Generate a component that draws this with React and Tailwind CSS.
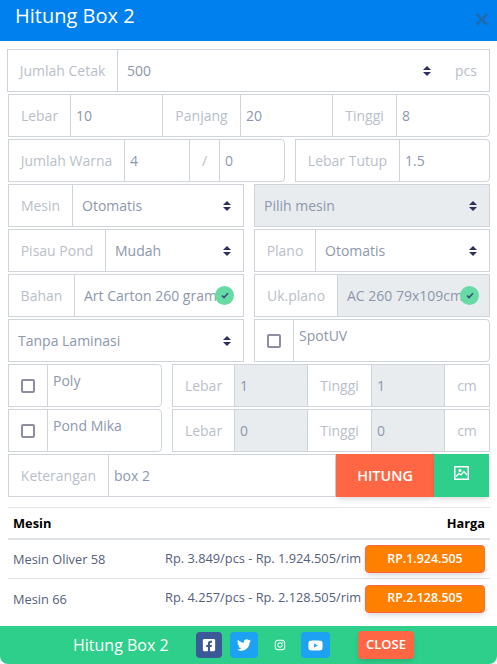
import React from 'react';
import { FaFacebookSquare, FaTwitter, FaInstagram, FaYoutube } from 'react-icons/fa';

const Chevrons = () => (
  <svg width="8" height="10" viewBox="0 0 8 10" className="shrink-0">
    <path d="M4 0 L8 4 H0 Z M4 10 L0 6 H8 Z" fill="#2f2f5e" />
  </svg>
);

const Check = ({ className }) => (
  <span className={`absolute top-[12px] w-[19px] h-[19px] rounded-full bg-[#66dba6] flex items-center justify-center ${className}`}>
    <svg width="8" height="7" viewBox="0 0 8 7">
      <path d="M1 3.5 L3 5.5 L7 1.2" fill="none" stroke="#36507a" strokeWidth="1.6" />
    </svg>
  </span>
);

const ImageIcon = () => (
  <svg width="15" height="14" viewBox="0 0 15 14" fill="none" stroke="white">
    <rect x="0.75" y="0.75" width="13.5" height="12.5" strokeWidth="1.5" />
    <circle cx="6" cy="4.5" r="1.6" fill="white" stroke="none" />
    <path d="M2 10.5 L5 7.5 L7 9 L10 5.5 L13 9" strokeWidth="1.2" />
  </svg>
);

const Label = ({ w, children, right }) => (
  <div className={`${w} shrink-0 h-full flex items-center justify-center border border-[#ced4da] -ml-px first:ml-0 text-[#b9bfc9] ${right ? 'rounded-r' : ''}`}>
    {children}
  </div>
);

const Input = ({ w, children, gray, right, pl = 'pl-[5px]' }) => (
  <div className={`${w} h-full flex items-center ${pl} border border-[#ced4da] -ml-px text-[#8d97ad] ${gray ? 'bg-[#e9ecef]' : ''} ${right ? 'rounded-r' : ''}`}>
    {children}
  </div>
);

const Select = ({ w, children, gray, noLabel }) => (
  <div className={`${w} h-full flex items-center justify-between pl-[9px] pr-[12px] border border-[#ced4da] ${noLabel ? '' : '-ml-px'} text-[#8d97ad] ${gray ? 'bg-[#e9ecef]' : ''}`}>
    <span>{children}</span>
    <Chevrons />
  </div>
);

const Box = () => <span className="block w-[14px] h-[14px] rounded-[2px] border-2 border-[#8f8ea0]" />;

const Row = ({ children, className = '' }) => (
  <div className={`flex h-[43px] ${className}`}>{children}</div>
);

const Half = ({ children, className = '' }) => (
  <div className={`relative flex h-full ${className}`}>{children}</div>
);

const CheckCell = ({ label, className }) => (
  <Half className={className}>
    <div className="w-[40px] shrink-0 h-full flex items-center justify-center border border-[#ced4da]"><Box /></div>
    <div className="flex-1 h-full border border-[#ced4da] -ml-px rounded-r pl-[5px] pt-[5px] text-[#8d97ad]">{label}</div>
  </Half>
);

const Size = ({ a, b }) => (
  <Half className="w-[318px] ml-[10px]">
    <Label w="w-[63px]">Lebar</Label>
    <Input w="w-[74px]" gray>{a}</Input>
    <Label w="w-[65px]">Tinggi</Label>
    <Input w="w-[74px]" gray>{b}</Input>
    <Label w="w-[46px]">cm</Label>
  </Half>
);

const PriceRow = ({ name, detail, total, border }) => (
  <div className={`flex h-[39px] items-center pl-[5px] pr-[5px] ${border ? 'border-b border-[#dee2e6]' : ''}`}>
    <span className="text-[12.8px] text-[#55607d] w-[150px] pt-[2px]">{name}</span>
    <span className="flex-1 text-right text-[12.8px] text-[#55607d] pr-[4px] pb-[1px] whitespace-nowrap">{detail}</span>
    <span className="w-[120px] h-[28px] flex items-center justify-center rounded bg-[#ff8000] border border-[#ff6644] text-white text-[12.4px] font-semibold shadow-md shrink-0">{total}</span>
  </div>
);

const Social = ({ w, bg, children }) => (
  <span className={`${w} h-[26px] rounded flex items-center justify-center text-white ${bg}`}>{children}</span>
);

export default function App() {
  return (
    <div className="w-[497px] h-[664px] bg-white flex flex-col font-['Open_Sans',sans-serif] text-[14px]">
      <div className="h-[41px] bg-[#0080ee] flex items-start justify-between pl-[15px] pr-[7px] shrink-0">
        <span className="text-[20px] leading-[32px] text-white">Hitung Box 2</span>
        <span className="text-[#1f6bab] text-[27px] leading-[26px] mt-[6px] font-semibold">×</span>
      </div>

      <div className="flex-1 pt-[8px] pl-[8px] pr-[7px] flex flex-col gap-[2px]">
        <Row className="-ml-px">
          <Label w="w-[111px]">Jumlah Cetak</Label>
          <div className="flex-1 h-full flex items-center justify-between border border-[#ced4da] -ml-px pl-[9px] pr-[12px] text-[#8d97ad]">
            <span>500</span>
            <span className="flex items-center gap-[24px]"><Chevrons /><span className="text-[#b9bfc9]">pcs</span></span>
          </div>
        </Row>
        <Row>
          <Label w="w-[63px]">Lebar</Label>
          <Input w="w-[93px]">10</Input>
          <Label w="w-[79px]">Panjang</Label>
          <Input w="w-[93px]">20</Input>
          <Label w="w-[65px]">Tinggi</Label>
          <Input w="flex-1" right>8</Input>
        </Row>
        <Row>
          <Half className="w-[277px]">
            <Label w="w-[117px]">Jumlah Warna</Label>
            <Input w="w-[66px]">4</Input>
            <Label w="w-[31px]">/</Label>
            <Input w="flex-1" right>0</Input>
          </Half>
          <Half className="flex-1 ml-[10px]">
            <Label w="w-[105px]">Lebar Tutup</Label>
            <Input w="flex-1" right>1.5</Input>
          </Half>
        </Row>
        <Row>
          <Half className="w-[236px]">
            <Label w="w-[65px]">Mesin</Label>
            <Select w="flex-1">Otomatis</Select>
          </Half>
          <Half className="flex-1 ml-[10px]">
            <Select w="flex-1" gray noLabel>Pilih mesin</Select>
          </Half>
        </Row>
        <Row>
          <Half className="w-[236px]">
            <Label w="w-[98px]">Pisau Pond</Label>
            <Select w="flex-1">Mudah</Select>
          </Half>
          <Half className="flex-1 ml-[10px]">
            <Label w="w-[62px]">Plano</Label>
            <Select w="flex-1">Otomatis</Select>
          </Half>
        </Row>
        <Row>
          <Half className="w-[236px]">
            <Label w="w-[67px]">Bahan</Label>
            <Input w="flex-1" pl="pl-[9px]">Art Carton 260 gram</Input>
            <Check className="left-[207px]" />
          </Half>
          <Half className="flex-1 ml-[10px]">
            <Label w="w-[84px]">Uk.plano</Label>
            <Input w="flex-1" gray pl="pl-[9px]">AC 260 79x109cm</Input>
            <Check className="left-[206px]" />
          </Half>
        </Row>
        <Row>
          <Half className="w-[236px]">
            <Select w="flex-1" noLabel>Tanpa Laminasi</Select>
          </Half>
          <CheckCell label="SpotUV" className="flex-1 ml-[10px]" />
        </Row>
        <Row>
          <CheckCell label="Poly" className="w-[154px]" />
          <Size a="1" b="1" />
        </Row>
        <Row>
          <CheckCell label="Pond Mika" className="w-[154px]" />
          <Size a="0" b="0" />
        </Row>
        <Row className="mr-px">
          <Label w="w-[101px]">Keterangan</Label>
          <Input w="flex-1">box 2</Input>
          <button className="w-[98px] h-full bg-[#ff6644] text-white text-[14.4px] font-semibold shrink-0 shadow-md">HITUNG</button>
          <button className="w-[55px] h-full bg-[#2ecf8b] flex items-center justify-center shrink-0 shadow-md pb-[5px]"><ImageIcon /></button>
        </Row>

        <div className="mt-[8px] border-t border-[#e3e6ea]">
          <div className="h-[28px] pt-[2px] flex items-center justify-between px-[5px] text-[12.8px] font-bold text-black border-b-2 border-[#dee2e6] box-content">
            <span>Mesin</span>
            <span>Harga</span>
          </div>
          <PriceRow name="Mesin Oliver 58" detail="Rp. 3.849/pcs - Rp. 1.924.505/rim" total="RP.1.924.505" border />
          <PriceRow name="Mesin 66" detail="Rp. 4.257/pcs - Rp. 2.128.505/rim" total="RP.2.128.505" />
        </div>
      </div>

      <div className="h-[38px] shrink-0 bg-[#2ecf8b] rounded-b-lg flex items-center pl-[73px]">
        <span className="text-[16px] text-white w-[123px]">Hitung Box 2</span>
        <div className="flex items-center">
          <Social w="w-[26px]" bg="bg-[#3b5998]"><FaFacebookSquare size={14} /></Social>
          <span className="w-[8px]" />
          <Social w="w-[28px]" bg="bg-[#1da1f2]"><FaTwitter size={14} /></Social>
          <span className="w-[15px]" />
          <span className="w-[13px] text-white flex justify-center"><FaInstagram size={12} /></span>
          <span className="w-[15px]" />
          <Social w="w-[29px]" bg="bg-[#1da1f2]"><FaYoutube size={15} /></Social>
        </div>
        <button className="ml-[28px] w-[56px] h-[28px] rounded bg-[#ff6644] text-white text-[13px] font-semibold shadow-md">CLOSE</button>
      </div>
    </div>
  );
}
